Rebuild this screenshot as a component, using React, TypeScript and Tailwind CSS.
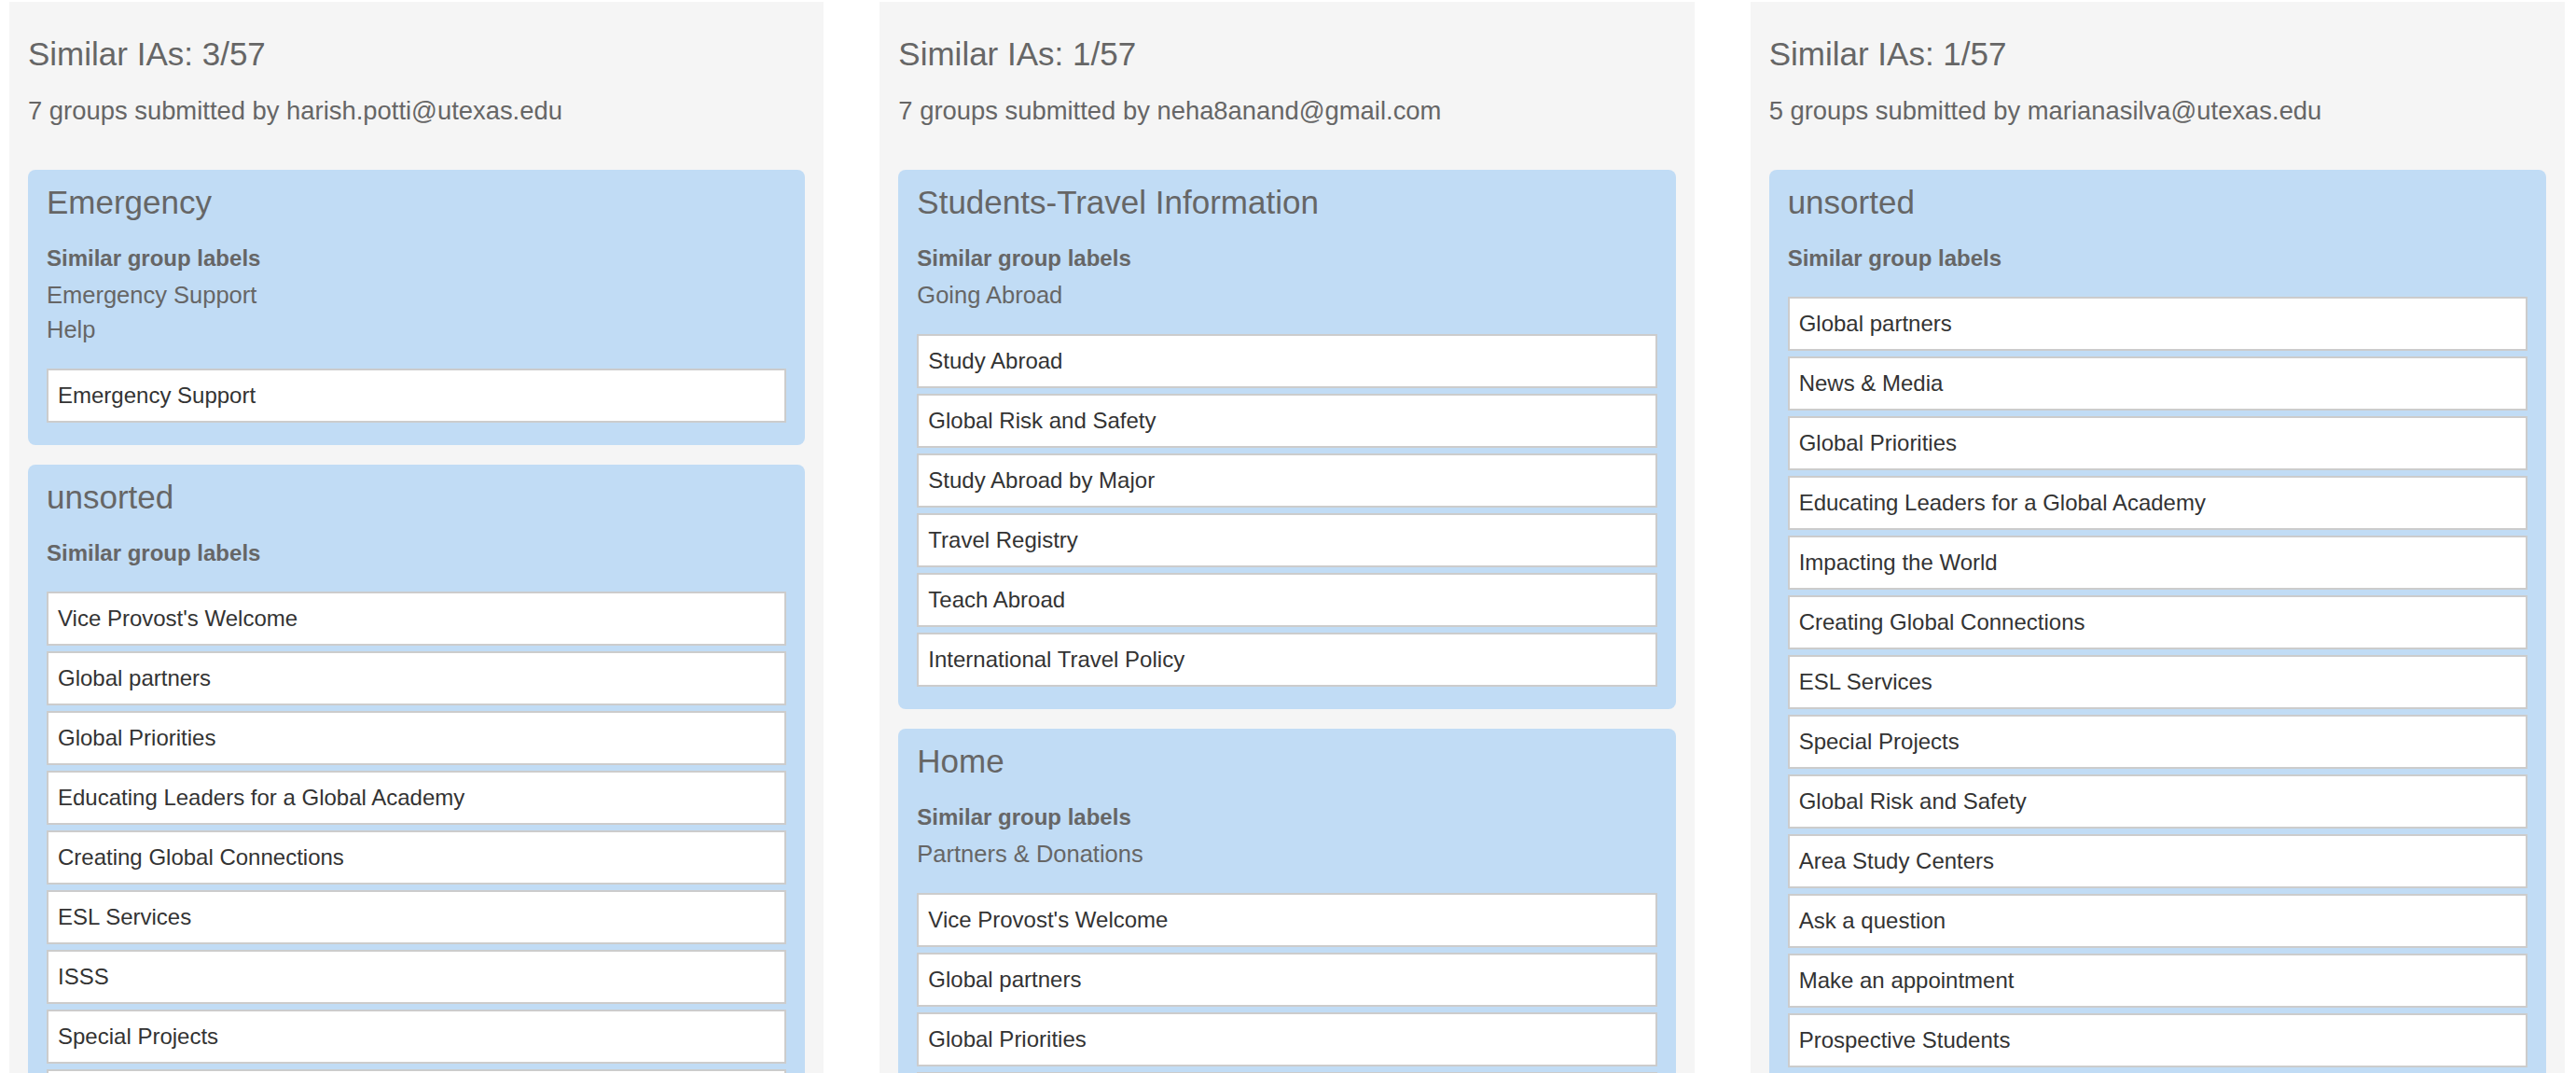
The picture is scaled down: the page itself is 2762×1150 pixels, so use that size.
type Group = {
  title: string;
  similar: string[];
  items: string[];
};

type Column = {
  count: string;
  submitted: string;
  groups: Group[];
};

const columns: Column[] = [
  {
    count: "Similar IAs: 3/57",
    submitted: "7 groups submitted by harish.potti@utexas.edu",
    groups: [
      { title: "Emergency", similar: ["Emergency Support", "Help"], items: ["Emergency Support"] },
      {
        title: "unsorted",
        similar: [],
        items: [
          "Vice Provost's Welcome",
          "Global partners",
          "Global Priorities",
          "Educating Leaders for a Global Academy",
          "Creating Global Connections",
          "ESL Services",
          "ISSS",
          "Special Projects",
          "Area Study Centers",
          "Prospective Students",
        ],
      },
    ],
  },
  {
    count: "Similar IAs: 1/57",
    submitted: "7 groups submitted by neha8anand@gmail.com",
    groups: [
      {
        title: "Students-Travel Information",
        similar: ["Going Abroad"],
        items: [
          "Study Abroad",
          "Global Risk and Safety",
          "Study Abroad by Major",
          "Travel Registry",
          "Teach Abroad",
          "International Travel Policy",
        ],
      },
      {
        title: "Home",
        similar: ["Partners & Donations"],
        items: [
          "Vice Provost's Welcome",
          "Global partners",
          "Global Priorities",
          "Educating Leaders for a Global Academy",
          "Impacting the World",
        ],
      },
    ],
  },
  {
    count: "Similar IAs: 1/57",
    submitted: "5 groups submitted by marianasilva@utexas.edu",
    groups: [
      {
        title: "unsorted",
        similar: [],
        items: [
          "Global partners",
          "News & Media",
          "Global Priorities",
          "Educating Leaders for a Global Academy",
          "Impacting the World",
          "Creating Global Connections",
          "ESL Services",
          "Special Projects",
          "Global Risk and Safety",
          "Area Study Centers",
          "Ask a question",
          "Make an appointment",
          "Prospective Students",
          "Current Students",
        ],
      },
    ],
  },
];

function GroupCard({ group }: { group: Group }) {
  return (
    <div className="bg-[#c1dcf5] rounded-[8px] pt-[15px] px-[20px] pb-[24px]">
      <h3 className="text-[35px] leading-[40px] text-[#666666]">{group.title}</h3>
      <div className="mt-[21px] text-[#666666] leading-[37px]">
        <p className="text-[24px] font-bold">Similar group labels</p>
        {group.similar.length > 0 && (
          <div className="mt-[3px]">
            {group.similar.map((s) => (
              <p key={s} className="text-[25.5px]">
                {s}
              </p>
            ))}
          </div>
        )}
      </div>
      <ul className="mt-[23px] flex flex-col gap-[6px]">
        {group.items.map((item, i) => (
          <li
            key={i}
            className="h-[58px] bg-white border-2 border-[#cccccc] pl-[10px] flex items-center text-[24px] text-[#333333]"
          >
            {item}
          </li>
        ))}
      </ul>
    </div>
  );
}

export default function App() {
  return (
    <div
      className="w-[2762px] h-[1150px] overflow-hidden bg-white pt-[2px] pl-[10px] pr-[12px]"
      style={{ fontFamily: '"Liberation Sans", Arial, sans-serif' }}
    >
      <div className="grid grid-cols-3 gap-[60px] items-start">
        {columns.map((col, idx) => (
          <div key={idx} className="bg-[#f5f5f5] pt-[36px] px-[20px] pb-[20px] min-h-[1200px]">
            <h2 className="text-[35px] leading-[40px] text-[#666666]">{col.count}</h2>
            <p className="mt-[23px] text-[27.4px] leading-[36px] text-[#666666]">{col.submitted}</p>
            <div className="mt-[45px] flex flex-col gap-[21px]">
              {col.groups.map((g, gi) => (
                <GroupCard key={gi} group={g} />
              ))}
            </div>
          </div>
        ))}
      </div>
    </div>
  );
}
